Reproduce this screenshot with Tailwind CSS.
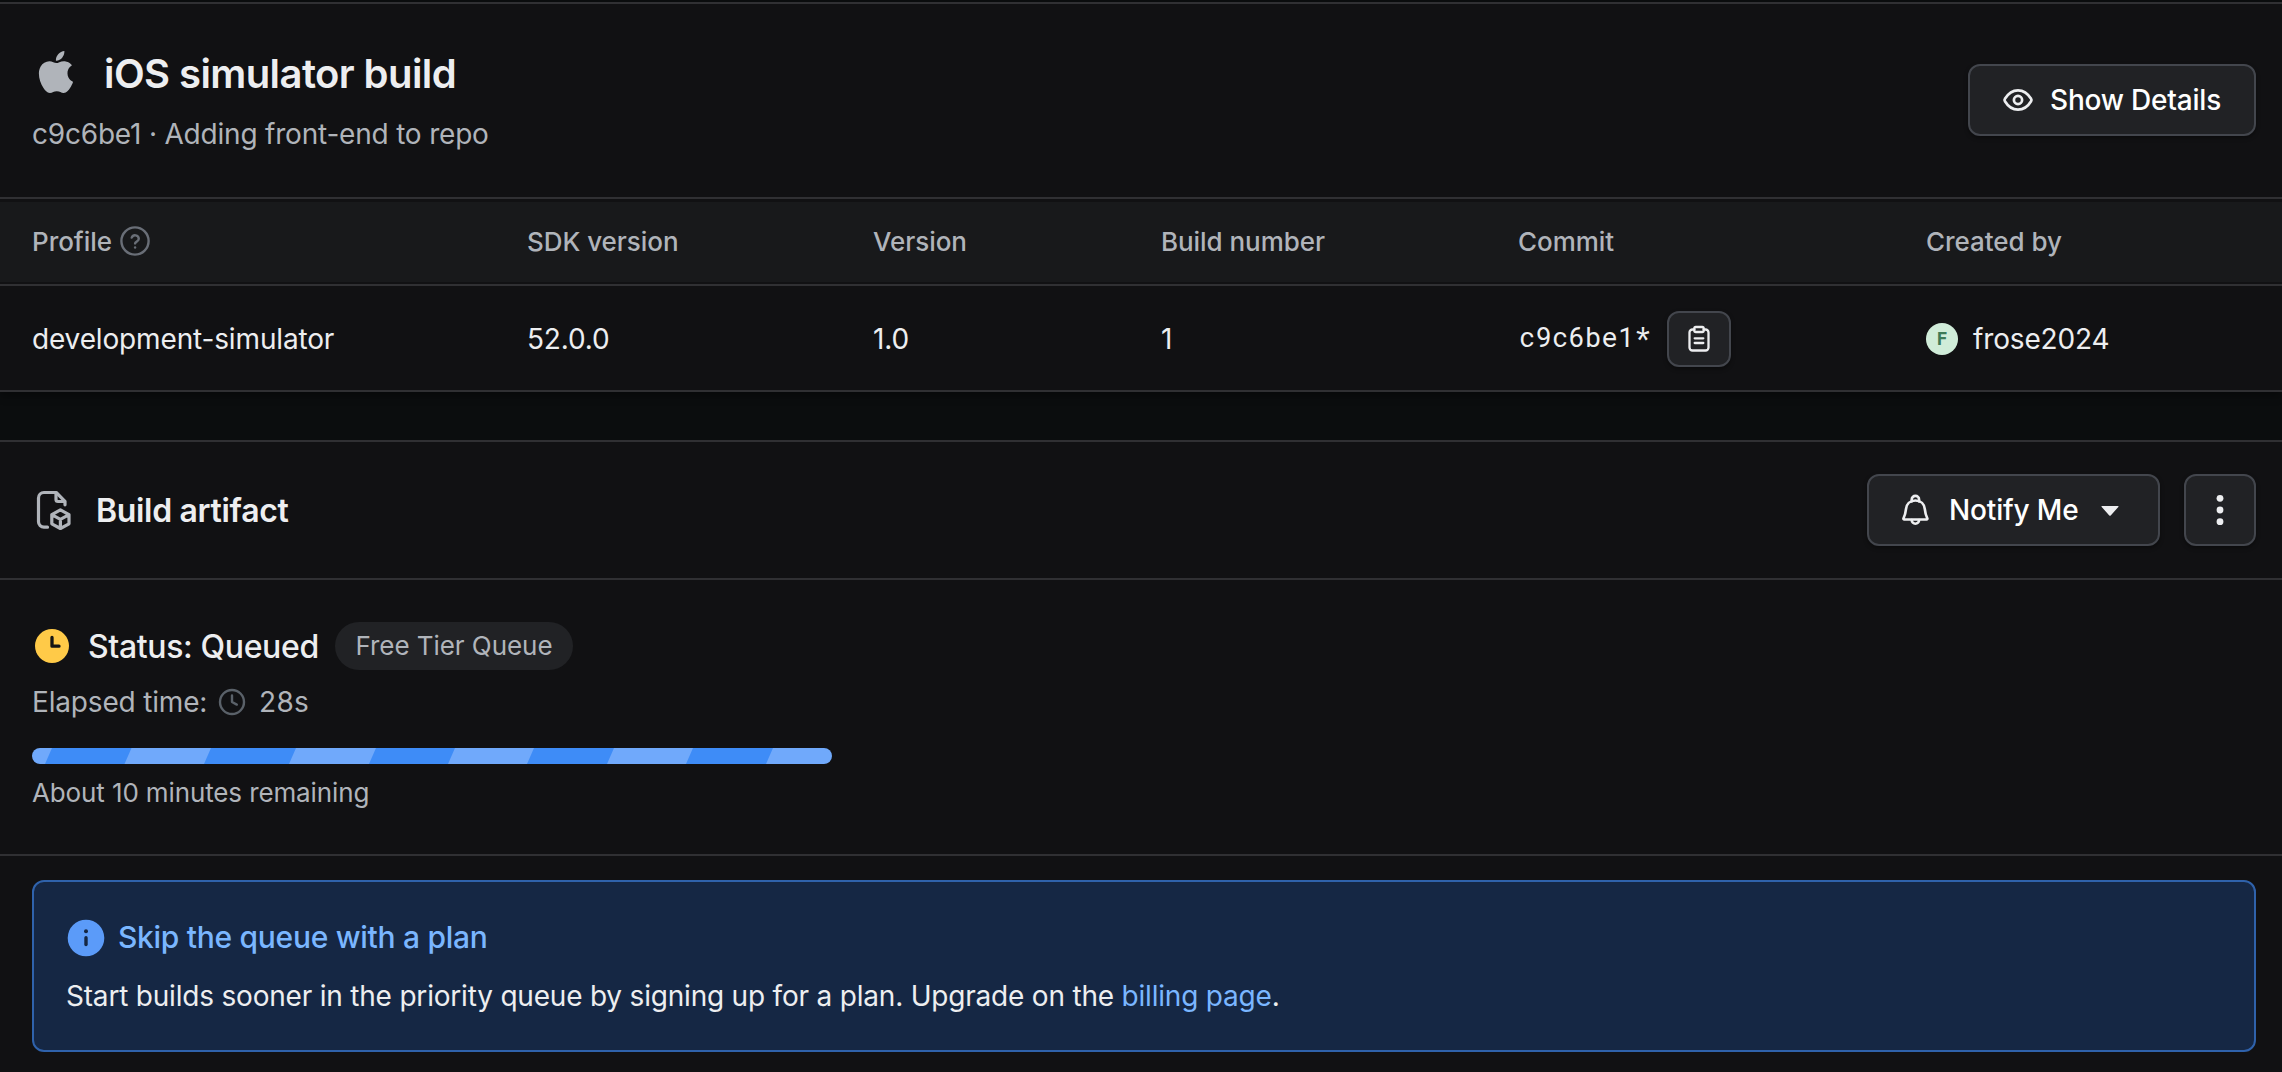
<!DOCTYPE html>
<html lang="en">
<head>
<meta charset="utf-8">
<title>iOS simulator build</title>
<script src="https://cdn.jsdelivr.net/npm/@tailwindcss/browser@4"></script>
</head>
<body class="h-[1072px] w-[2282px] overflow-hidden bg-[#0b0d0e] pt-0.5 font-['Inter',sans-serif] text-[28px] text-[#edeef0]">
  <!-- Build summary -->
  <section class="border-y-2 border-[#303033] bg-[#111113] shadow-[0_4px_8px_rgba(0,0,0,0.35)]">
    <header class="flex h-[193px] items-start justify-between px-8 pr-[26px]">
      <div class="pt-[45px]">
        <div class="flex h-12 items-center gap-6">
          <span class="flex size-12 items-center justify-center">
            <svg class="-mt-0.5 h-[42px] w-[42px]" viewBox="0 0 24 24" fill="#b0b4ba"><path d="M12.152 6.896c-.948 0-2.415-1.078-3.96-1.04-2.04.027-3.91 1.183-4.961 3.014-2.117 3.675-.546 9.103 1.519 12.09 1.013 1.454 2.208 3.09 3.792 3.039 1.52-.065 2.09-.987 3.935-.987 1.831 0 2.35.987 3.96.948 1.637-.026 2.676-1.48 3.676-2.948 1.156-1.688 1.636-3.325 1.662-3.415-.039-.013-3.182-1.221-3.22-4.857-.026-3.04 2.48-4.494 2.597-4.559-1.429-2.09-3.623-2.324-4.39-2.376-2-.156-3.675 1.09-4.61 1.09zM15.53 3.83c.843-1.012 1.4-2.427 1.245-3.83-1.207.052-2.662.805-3.532 1.818-.78.896-1.454 2.338-1.273 3.714 1.338.104 2.715-.688 3.559-1.701"/></svg>
          </span>
          <h1 class="pt-0.5 text-[40px] leading-[48px] font-semibold tracking-[-0.58px]">iOS simulator build</h1>
        </div>
        <p class="mt-[17px] leading-10 tracking-[-0.2px] text-[#b0b4ba]">c9c6be1 · Adding front-end to repo</p>
      </div>
      <button class="mt-[60px] flex h-[72px] w-[288px] items-center rounded-xl border-2 border-[#43464d] bg-[#212225] pl-8 font-medium tracking-[-0.2px] text-white shadow-[0_2px_4px_rgba(0,0,0,0.4)]">
        <svg class="h-8 w-8" viewBox="0 0 32 32" fill="none" stroke="#edeef0" stroke-width="2.7"><path d="M2.9 17.2a2.2 2.2 0 0 1 0-2.4C4.8 11.700 9.500 6.300 16 6.300s11.200 5.400 13.100 8.500a2.200 2.200 0 0 1 0 2.400C27.200 20.300 22.500 25.700 16 25.700S4.800 20.300 2.900 17.200Z"/><circle cx="16" cy="16" r="4.100"/></svg>
        <span class="ml-4">Show Details</span>
      </button>
    </header>

    <div class="border-y-2 border-[#303033] pt-[3px] pb-0.5">
      <div class="grid h-20 grid-cols-[495px_346px_288px_357px_408px_1fr] items-center bg-[#18191b] pb-0.5 pl-8 text-[26px] font-medium tracking-[-0.05px] text-[#b0b4ba]">
        <span class="flex items-center gap-2">Profile
          <svg class="size-8 translate-y-px" viewBox="0 0 32 32" fill="none" stroke="#696e77" stroke-width="2.4" stroke-linecap="round" stroke-linejoin="round"><circle cx="15" cy="15" r="13.600"/><path d="M11.700 11.600a3.700 3.700 0 0 1 7.100 1.200c0 2.400-3.700 3.300-3.700 4.600"/><path d="M15.100 21.500v.1"/></svg>
        </span>
        <span>SDK version</span><span>Version</span><span>Build number</span><span>Commit</span><span>Created by</span>
      </div>
    </div>
    <div class="grid h-[104px] grid-cols-[495px_346px_288px_357px_408px_1fr] items-center pt-px pl-8 tracking-[-0.15px]">
      <span>development-simulator</span><span>52.0.0</span><span>1.0</span><span>1</span>
      <span class="flex items-center">
        <code class="w-[149px] pb-0.5 pl-px font-['Roboto_Mono','DejaVu_Sans_Mono',monospace] text-[27px] tracking-[0.3px]">c9c6be1*</code>
        <button class="flex h-14 w-16 items-center justify-center rounded-xl border-2 border-[#43464d] bg-[#212225] shadow-[0_2px_4px_rgba(0,0,0,0.4)]">
          <svg class="size-7" viewBox="0 0 28 28" fill="none" stroke="#edeef0" stroke-width="2.300" stroke-linecap="round" stroke-linejoin="round"><path d="M9.300 4.500H7.500a3 3 0 0 0-3 3v15a3 3 0 0 0 3 3h13a3 3 0 0 0 3-3v-15a3 3 0 0 0-3-3h-1.800"/><rect x="9.300" y="2" width="9.400" height="5" rx="1.500"/><path d="M9.700 13.300h8.600M9.700 18h8.600"/></svg>
        </button>
      </span>
      <span class="flex items-center gap-[15px]">
        <span class="flex size-8 items-center justify-center rounded-full bg-[#d0ecd9] font-['Roboto',sans-serif] text-[18px] font-bold tracking-normal text-[#3d7a58]">F</span>
        <span>frose2024</span>
      </span>
    </div>
  </section>

  <!-- Build artifact -->
  <section class="mt-12 h-[640px] border-t-2 border-[#303033] bg-[#111113]">
    <header class="flex h-[138px] items-center justify-between border-b-2 border-[#303033] pr-[26px] pl-8">
      <div class="flex items-center gap-4">
        <svg class="size-12" viewBox="0 0 48 48" fill="none" stroke="#b0b4ba" stroke-width="3.2" stroke-linecap="round" stroke-linejoin="round"><path d="M15.500 41.200h-3.500a5.500 5.500 0 0 1-5.500-5.500V12a5.500 5.500 0 0 1 5.500-5.500h12.200L33 15.300v3.500"/><path d="M24 7v6.500a2 2 0 0 0 2 2h6.500"/><path d="M28.400 23.900l8.600 4.700v9.200l-8.600 4.700-8.600-4.700v-9.200zM20.200 28.900l8.200 4.400 8.200-4.400M28.400 33.300v8.700"/></svg>
        <h2 class="pt-0.5 text-[32px] font-semibold tracking-[-0.32px]">Build artifact</h2>
      </div>
      <div class="flex gap-6">
        <button class="flex h-[72px] w-[293px] items-center rounded-xl border-2 border-[#43464d] bg-[#212225] pl-[30px] font-medium tracking-[-0.15px] text-white shadow-[0_2px_4px_rgba(0,0,0,0.4)]">
          <svg class="size-8" viewBox="0 0 32 32" fill="none" stroke="#edeef0" stroke-width="2.600" stroke-linecap="round" stroke-linejoin="round"><path d="M5.200 25.500c-.6 0-1-.6-.700-1.200 1.600-3.200 2.100-5.300 2.500-9.300C7.500 10.300 10.800 6.500 16.400 6.500s8.900 3.800 9.400 8.500c.4 4 .9 6.100 2.500 9.300.3.600-.1 1.200-.7 1.200Z"/><path d="M12.700 7.500V5.600a3.700 3.700 0 0 1 7.400 0v1.900M12.700 26a3.700 3.700 0 0 0 7.400 0"/></svg>
          <span class="ml-[18px]">Notify Me</span>
          <svg class="mt-0.5 ml-[22px] h-2.5 w-[18px]" viewBox="0 0 18 10" fill="#edeef0"><path d="M1.200 0h15.600q1.400 0 .5 1L9.700 9.400q-.7.800-1.400 0L.7 1Q-.2 0 1.200 0Z"/></svg>
        </button>
        <button class="flex size-[72px] items-center justify-center rounded-xl border-2 border-[#43464d] bg-[#212225] shadow-[0_2px_4px_rgba(0,0,0,0.4)]">
          <svg class="size-8" viewBox="0 0 32 32" fill="#edeef0"><circle cx="16" cy="4.300" r="3.400"/><circle cx="16" cy="16" r="3.400"/><circle cx="16" cy="27.700" r="3.400"/></svg>
        </button>
      </div>
    </header>

    <div class="h-[276px] border-b-2 border-[#303033] pt-[42px] pl-8">
      <div class="flex h-12 items-center">
        <svg class="size-10" viewBox="0 0 40 40"><circle cx="20" cy="20" r="17" fill="#ffca48"/><path d="M20 11.500v8.700h7" fill="none" stroke="#151515" stroke-width="3.300" stroke-linecap="round" stroke-linejoin="round"/></svg>
        <span class="ml-4 w-[232px] pt-0.5 text-[32px] font-medium tracking-[-0.37px] whitespace-nowrap">Status: Queued</span>
        <span class="ml-[15px] flex h-12 w-[238px] items-center justify-center rounded-full bg-[#212225] pb-0.5 text-[26px] tracking-[-0.05px] text-[#b0b4ba]">Free Tier Queue</span>
      </div>
      <div class="mt-3 flex h-10 items-center text-[#b0b4ba]">
        <span class="w-44 tracking-[-0.17px] whitespace-nowrap">Elapsed time:</span>
        <svg class="ml-[10px] size-7" viewBox="0 0 28 28" fill="none" stroke="#5a6169" stroke-width="2.400" stroke-linecap="round" stroke-linejoin="round"><circle cx="14" cy="14" r="12"/><path d="M14 7.500V14l4.800 2.600"/></svg>
        <span class="ml-[13px] tracking-[0.3px]">28s</span>
      </div>
      <svg class="mt-[26px] h-4 w-[800px] rounded-full bg-[#70a9fb]" viewBox="0 0 800 16" fill="#3e8cf7"><path d="M20 0h79.500l-7 16H13zM179 0h85l-7 16h-85zM344 0h79l-7 16h-79zM502 0h80l-7 16h-80zM661 0h80l-7 16h-80z"/></svg>
      <p class="mt-[11px] text-[26px] leading-9 tracking-[-0.12px] text-[#b0b4ba]">About 10 minutes remaining</p>
    </div>

    <!-- Plan upgrade notice -->
    <div class="mt-6 mr-[26px] ml-8 h-[172px] rounded-xl border-2 border-[#2f62ab] bg-[#152744] px-8 pt-[35px]">
      <div class="flex h-10 items-center">
        <svg class="size-10" viewBox="0 0 40 40"><circle cx="20" cy="21" r="18.300" fill="#5b9bf9"/><circle cx="20" cy="14.200" r="2" fill="#152744"/><path d="M20 20.800v6.700" stroke="#152744" stroke-width="3.400" stroke-linecap="round"/></svg>
        <h3 class="ml-3 text-[30px] font-medium tracking-[-0.29px] text-[#7ab6ff]">Skip the queue with a plan</h3>
      </div>
      <p class="mt-[21px] leading-9 tracking-[-0.2px]">Start builds sooner in the priority queue by signing up for a plan. Upgrade on the <a class="text-[#7ab6ff]">billing page</a>.</p>
    </div>
  </section>
</body>
</html>
